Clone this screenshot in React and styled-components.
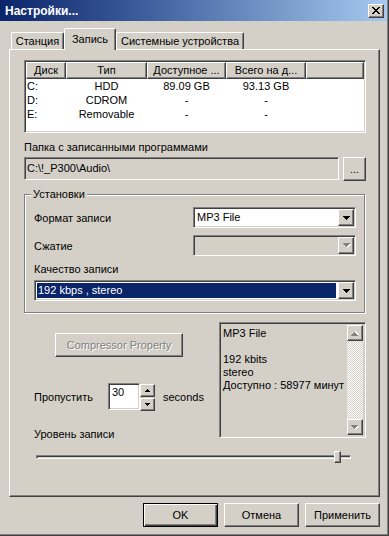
import React from "react";
import styled, { createGlobalStyle, css } from "styled-components";

const GlobalStyle = createGlobalStyle`
  html, body {
    margin: 0;
    padding: 0;
    background: #d4d0c8;
  }
  body {
    font-family: "Liberation Sans", Arial, sans-serif;
    font-size: 11px;
    color: #000;
  }
  * {
    box-sizing: border-box;
  }
`;

const raised = css`
  border: 1px solid;
  border-color: #fff #404040 #404040 #fff;
  box-shadow: inset -1px -1px #808080;
  background: #d4d0c8;
`;

const sunken = css`
  border: 1px solid;
  border-color: #808080 #fff #fff #808080;
  box-shadow: inset 1px 1px #404040, inset -1px -1px #d4d0c8;
`;

const Window = styled.div`
  width: 389px;
  height: 536px;
  background: #d4d0c8;
  display: flex;
  flex-direction: column;
  border-right: 1px solid #404040;
  border-bottom: 1px solid #404040;
  box-shadow: inset -1px -1px #808080;
`;

const TitleBar = styled.div`
  height: 21px;
  flex-shrink: 0;
  display: flex;
  align-items: center;
  justify-content: space-between;
  padding: 0 3px 0 5px;
  margin-right: 1px;
  background: linear-gradient(to right, #0a246a, #3a5a9a 35%, #a6caf0);
  color: #fff;
  font-weight: bold;
  font-size: 12px;
`;

const CloseButton = styled.div`
  ${raised};
  width: 16px;
  height: 14px;
  display: flex;
  align-items: center;
  justify-content: center;
  padding-bottom: 1px;
`;

const Body = styled.div`
  padding: 7px 0 0 9px;
  display: flex;
  flex-direction: column;
`;

const TabStrip = styled.div`
  height: 21px;
  display: flex;
  align-items: flex-end;
  padding-left: 2px;
`;

const Tab = styled.div`
  width: ${(p) => p.$w}px;
  height: ${(p) => (p.$active ? 22 : 17)}px;
  margin-bottom: ${(p) => (p.$active ? -1 : 0)}px;
  padding-bottom: ${(p) => (p.$active ? 2 : 0)}px;
  position: relative;
  z-index: ${(p) => (p.$active ? 1 : 0)};
  background: #d4d0c8;
  border-top: 1px solid #fff;
  border-left: 1px solid #fff;
  border-right: 1px solid #404040;
  box-shadow: inset -1px 0 #808080;
  border-radius: 2px 2px 0 0;
  display: flex;
  align-items: center;
  justify-content: center;
  white-space: nowrap;
`;

const Panel = styled.div`
  width: 371px;
  height: 448px;
  border: 1px solid;
  border-color: #fff #404040 #404040 #fff;
  box-shadow: inset -1px -1px #808080;
  padding: 10px 13px 0 14px;
  display: flex;
  flex-direction: column;
`;

const ListView = styled.div`
  ${sunken};
  height: 73px;
  background: #fff;
  padding: 1px;
  flex-shrink: 0;
`;

const ListGrid = styled.div`
  display: grid;
  grid-template-columns: 40px 81px 79px 80px 1fr;
`;

const HeaderCell = styled.div`
  ${raised};
  height: 17px;
  line-height: 15px;
  text-align: center;
  white-space: nowrap;
  overflow: hidden;
  padding: 0 2px;
`;

const Cell = styled.div`
  height: 14px;
  line-height: 14px;
  text-align: ${(p) => p.$align || "center"};
  padding-left: ${(p) => (p.$align === "left" ? 1 : 0)}px;
  white-space: nowrap;
`;

const FieldLabel = styled.div`
  line-height: 13px;
  margin-top: ${(p) => p.$mt || 0}px;
  padding-left: ${(p) => p.$pl || 0}px;
  color: ${(p) => (p.$disabled ? "#000" : "#000")};
`;

const PathRow = styled.div`
  display: flex;
  align-items: flex-start;
  gap: 4px;
  margin-top: 3px;
`;

const PathField = styled.div`
  ${sunken};
  flex: 1;
  height: 23px;
  background: #d4d0c8;
  padding: 3px 2px 0;
  line-height: 14px;
`;

const PushButton = styled.div`
  ${(p) =>
    p.$default
      ? css`
          border: 1px solid #000;
          box-shadow: inset 1px 1px #fff, inset -1px -1px #404040,
            inset -2px -2px #808080;
          background: #d4d0c8;
        `
      : raised};
  width: ${(p) => p.$w}px;
  height: 24px;
  display: flex;
  align-items: center;
  justify-content: center;
  flex-shrink: 0;
  color: ${(p) => (p.$disabled ? "#808080" : "#000")};
  text-shadow: ${(p) => (p.$disabled ? "1px 1px 0 #fff" : "none")};
  margin-top: ${(p) => p.$mt || 0}px;
  margin-left: ${(p) => p.$ml || 0}px;
  padding-bottom: 1px;
`;

const GroupBox = styled.div`
  width: 341px;
  margin-top: 13px;
  border: 1px solid #808080;
  box-shadow: 1px 1px 0 #fff, inset 1px 1px 0 #fff;
  padding: 0 8px 11px 9px;
  display: flex;
  flex-direction: column;
`;

const GroupTitle = styled.div`
  align-self: flex-start;
  margin: -7px 0 0 -3px;
  padding: 0 2px;
  line-height: 13px;
  background: #d4d0c8;
`;

const SettingRow = styled.div`
  display: flex;
  align-items: center;
  justify-content: space-between;
  height: 21px;
  margin-top: ${(p) => p.$mt}px;
`;

const Combo = styled.div`
  ${sunken};
  width: ${(p) => (p.$w ? `${p.$w}px` : "100%")};
  height: 21px;
  padding: 1px;
  display: flex;
  background: ${(p) => (p.$disabled ? "#d4d0c8" : "#fff")};
  margin-top: ${(p) => p.$mt || 0}px;
`;

const ComboText = styled.div`
  flex: 1;
  margin: ${(p) => (p.$selected ? "1px 2px 1px 1px" : "0")};
  padding-left: ${(p) => (p.$selected ? 1 : 2)}px;
  line-height: ${(p) => (p.$selected ? 15 : 17)}px;
  background: ${(p) => (p.$selected ? "#0a246a" : "transparent")};
  color: ${(p) => (p.$selected ? "#fff" : "#000")};
  white-space: nowrap;
`;

const DropButton = styled.div`
  ${raised};
  width: 16px;
  height: 17px;
  display: flex;
  align-items: center;
  justify-content: center;
  padding-left: 1px;
`;

const LowerArea = styled.div`
  display: flex;
  align-items: flex-start;
  margin-top: 9px;
`;

const LeftCol = styled.div`
  width: 195px;
  display: flex;
  flex-direction: column;
`;

const SpinRow = styled.div`
  display: flex;
  align-items: center;
  height: 27px;
  margin-top: 26px;
  padding-left: 10px;
`;

const SpinLabel = styled.div`
  width: 74px;
`;

const SpinInput = styled.div`
  ${sunken};
  width: 32px;
  height: 27px;
  background: #fff;
  padding: 2px 0 0 3px;
  line-height: 13px;
`;

const SpinButtons = styled.div`
  display: flex;
  flex-direction: column;
  gap: 1px;
  width: 15px;
  margin-top: 1px;
`;

const SpinButton = styled.div`
  ${raised};
  height: ${(p) => p.$h}px;
  display: flex;
  align-items: center;
  justify-content: center;
`;

const Unit = styled.div`
  margin-left: 8px;
`;

const InfoBox = styled.div`
  ${sunken};
  width: 147px;
  height: 116px;
  background: #d4d0c8;
  padding: 2px;
  display: flex;
`;

const InfoText = styled.div`
  flex: 1;
  padding: 2px 0 0 1px;
  line-height: 13px;
  white-space: pre-line;
`;

const ScrollBar = styled.div`
  width: 16px;
  display: flex;
  flex-direction: column;
`;

const ScrollArrow = styled.div`
  ${raised};
  height: 16px;
  display: flex;
  align-items: center;
  justify-content: center;
`;

const ScrollTrack = styled.div`
  flex: 1;
  background: repeating-conic-gradient(#fff 0 25%, #d4d0c8 0 50%) 0 0 / 2px
    2px;
`;

const SliderWrap = styled.div`
  position: relative;
  width: 315px;
  height: 12px;
  margin: 10px 0 0 12px;
  display: flex;
  align-items: center;
`;

const SliderTrack = styled.div`
  width: 100%;
  height: 4px;
  border: 1px solid;
  border-color: #808080 #fff #fff #808080;
  box-shadow: inset 1px 1px #404040;
`;

const SliderThumb = styled.div`
  ${raised};
  position: absolute;
  top: 0;
  width: 7px;
  height: 12px;
`;

const ButtonRow = styled.div`
  width: 371px;
  display: flex;
  justify-content: flex-end;
  gap: 6px;
  margin-top: 6px;
`;

const CloseGlyph = () => {
  const rows = [
    [0, 1, 6, 7],
    [1, 2, 5, 6],
    [2, 3, 4, 5],
    [3, 4],
    [2, 3, 4, 5],
    [1, 2, 5, 6],
    [0, 1, 6, 7],
  ];
  return (
    <svg width="8" height="7" viewBox="0 0 8 7" shapeRendering="crispEdges">
      {rows.map((xs, y) =>
        xs.map((x) => <rect key={`${x}-${y}`} x={x} y={y} width="1" height="1" fill="#000" />)
      )}
    </svg>
  );
};

// pixel triangles, pointing down unless up is set
const Arrow = ({ size = 7, up, color = "#000", emboss }) => {
  const h = Math.ceil(size / 2);
  let d = `M0 0h${size}`;
  for (let i = 0; i < h - 1; i++) d += "v1h-1";
  d += "v1h-1";
  for (let i = 0; i < h - 1; i++) d += "v-1h-1";
  d += "z";
  const w = size + (emboss ? 1 : 0);
  return (
    <svg
      width={w}
      height={h + (emboss ? 1 : 0)}
      viewBox={`0 0 ${w} ${h + (emboss ? 1 : 0)}`}
      shapeRendering="crispEdges"
      style={up ? { transform: "scaleY(-1)" } : undefined}
    >
      {emboss && <path d={d} fill="#fff" transform="translate(1 1)" />}
      <path d={d} fill={color} />
    </svg>
  );
};

const drives = [
  ["C:", "HDD", "89.09 GB", "93.13 GB"],
  ["D:", "CDROM", "-", "-"],
  ["E:", "Removable", "-", "-"],
];

const tabs = [
  { label: "Станция", w: 53 },
  { label: "Запись", w: 52, active: true },
  { label: "Системные устройства", w: 128 },
];

export default function App() {
  return (
    <>
      <GlobalStyle />
      <Window>
        <TitleBar>
          <span>Настройки...</span>
          <CloseButton>
            <CloseGlyph />
          </CloseButton>
        </TitleBar>

        <Body>
          <TabStrip>
            {tabs.map((t) => (
              <Tab key={t.label} $w={t.w} $active={t.active}>
                {t.label}
              </Tab>
            ))}
          </TabStrip>

          <Panel>
            <ListView>
              <ListGrid>
                <HeaderCell>Диск</HeaderCell>
                <HeaderCell>Тип</HeaderCell>
                <HeaderCell>Доступное ...</HeaderCell>
                <HeaderCell>Всего на д...</HeaderCell>
                <HeaderCell />
                {drives.map((d) => (
                  <React.Fragment key={d[0]}>
                    <Cell $align="left">{d[0]}</Cell>
                    <Cell>{d[1]}</Cell>
                    <Cell>{d[2]}</Cell>
                    <Cell>{d[3]}</Cell>
                    <Cell />
                  </React.Fragment>
                ))}
              </ListGrid>
            </ListView>

            <FieldLabel $mt={8}>Папка с записанными программами</FieldLabel>
            <PathRow>
              <PathField>C:\!_P300\Audio\</PathField>
              <PushButton $w={23}>...</PushButton>
            </PathRow>

            <GroupBox>
              <GroupTitle>Установки</GroupTitle>
              <SettingRow $mt={6}>
                <span>Формат записи</span>
                <Combo $w={163}>
                  <ComboText>MP3 File</ComboText>
                  <DropButton>
                    <Arrow />
                  </DropButton>
                </Combo>
              </SettingRow>
              <SettingRow $mt={7}>
                <span>Сжатие</span>
                <Combo $w={163} $disabled>
                  <ComboText />
                  <DropButton>
                    <Arrow color="#808080" emboss />
                  </DropButton>
                </Combo>
              </SettingRow>
              <FieldLabel $mt={7}>Качество записи</FieldLabel>
              <Combo $mt={4}>
                <ComboText $selected>192 kbps , stereo</ComboText>
                <DropButton>
                  <Arrow />
                </DropButton>
              </Combo>
            </GroupBox>

            <LowerArea>
              <LeftCol>
                <PushButton $w={128} $mt={11} $ml={31} $disabled>
                  Compressor Property
                </PushButton>
                <SpinRow>
                  <SpinLabel>Пропустить</SpinLabel>
                  <SpinInput>30</SpinInput>
                  <SpinButtons>
                    <SpinButton $h={13}>
                      <Arrow size={5} up />
                    </SpinButton>
                    <SpinButton $h={13}>
                      <Arrow size={5} />
                    </SpinButton>
                  </SpinButtons>
                  <Unit>seconds</Unit>
                </SpinRow>
                <FieldLabel $mt={18} $pl={10}>
                  Уровень записи
                </FieldLabel>
              </LeftCol>

              <InfoBox>
                <InfoText>
                  {"MP3 File\n\n192 kbits\nstereo\nДоступно : 58977 минут"}
                </InfoText>
                <ScrollBar>
                  <ScrollArrow>
                    <Arrow up color="#808080" emboss />
                  </ScrollArrow>
                  <ScrollTrack />
                  <ScrollArrow>
                    <Arrow color="#808080" emboss />
                  </ScrollArrow>
                </ScrollBar>
              </InfoBox>
            </LowerArea>

            <SliderWrap>
              <SliderTrack />
              <SliderThumb style={{ left: 298 }} />
            </SliderWrap>
          </Panel>

          <ButtonRow>
            <PushButton $w={75} $default>
              OK
            </PushButton>
            <PushButton $w={75}>Отмена</PushButton>
            <PushButton $w={75}>Применить</PushButton>
          </ButtonRow>
        </Body>
      </Window>
    </>
  );
}
